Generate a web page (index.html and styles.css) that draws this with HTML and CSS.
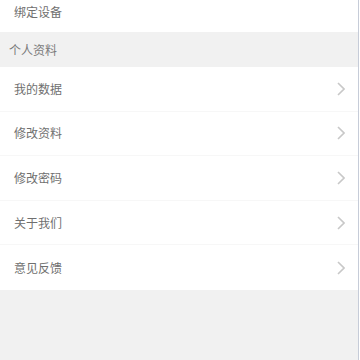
FILE: index.html
```html
<!DOCTYPE html>
<html lang="zh">
<head>
<meta charset="utf-8">
<link rel="stylesheet" href="styles.css">
</head>
<body>
<div class="page">
  <div class="row first"><span class="label">绑定设备</span></div>
  <div class="section">个人资料</div>
  <div class="list">
    <div class="row item"><span class="label">我的数据</span><svg class="chev" viewBox="0 0 8 14"><path d="M1 1 L7 7 L1 13" /></svg></div>
    <div class="row item"><span class="label">修改资料</span><svg class="chev" viewBox="0 0 8 14"><path d="M1 1 L7 7 L1 13" /></svg></div>
    <div class="row item"><span class="label">修改密码</span><svg class="chev" viewBox="0 0 8 14"><path d="M1 1 L7 7 L1 13" /></svg></div>
    <div class="row item"><span class="label">关于我们</span><svg class="chev" viewBox="0 0 8 14"><path d="M1 1 L7 7 L1 13" /></svg></div>
    <div class="row item last"><span class="label">意见反馈</span><svg class="chev" viewBox="0 0 8 14"><path d="M1 1 L7 7 L1 13" /></svg></div>
  </div>
  <div class="rest"></div>
</div>
</body>
</html>
```
FILE: styles.css
```css
html, body {
  margin: 0;
  padding: 0;
  background: #ffffff;
}
body {
  width: 360px;
  height: 360px;
  overflow: hidden;
  font-family: "Noto Sans CJK SC", "Noto Sans", sans-serif;
}
.page {
  width: 358px;
  height: 360px;
  border-right: 1px solid #c6ccd8;
  display: flex;
  flex-direction: column;
  background: #f1f1f1;
}
.row {
  display: flex;
  align-items: center;
  justify-content: space-between;
  background: #ffffff;
  box-sizing: border-box;
  padding: 0 14px;
}
.label {
  font-size: 12px;
  color: #6f6f6f;
  line-height: 16px;
}
.first {
  height: 32px;
  align-items: flex-start;
  padding-top: 4px;
}
.section {
  height: 35px;
  box-sizing: border-box;
  padding: 0 9px;
  display: flex;
  align-items: center;
  font-size: 12px;
  color: #7a7a7a;
  background: #f1f1f1;
}
.item {
  height: 44.6px;
  border-bottom: 1px solid #f7f7f7;
  padding-right: 13px;
}
.item.last {
  border-bottom: none;
}
.chev {
  width: 8px;
  height: 14px;
  fill: none;
  stroke: #c8c8c8;
  stroke-width: 1.6;
}
.rest {
  flex: 1;
  background: #f1f1f1;
}
```
